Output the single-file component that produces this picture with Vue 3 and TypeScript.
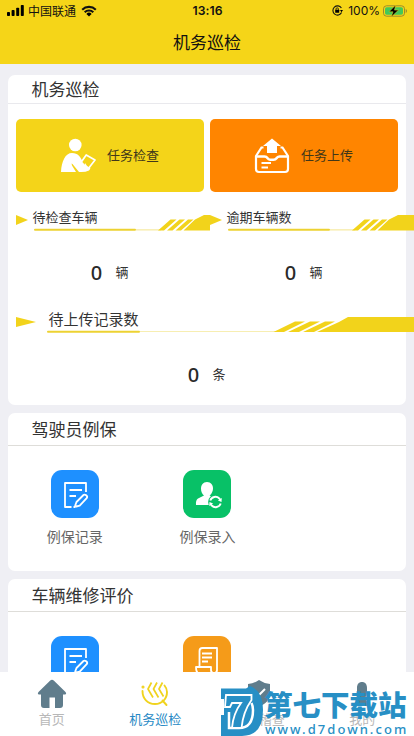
<script setup lang="ts">
import { ref } from 'vue'

interface Entry {
  label: string
  tone: 'blue' | 'green' | 'orange'
  icon: 'note' | 'user' | 'bill'
}
interface Section {
  title: string
  entries: Entry[]
}

const counts = ref([
  { label: '待检查车辆', value: 0, unit: '辆', end: 194 },
  { label: '逾期车辆数', value: 0, unit: '辆', end: 204 },
])
const pending = ref(0)

const sections: Section[] = [
  {
    title: '驾驶员例保',
    entries: [
      { label: '例保记录', tone: 'blue', icon: 'note' },
      { label: '例保录入', tone: 'green', icon: 'user' },
    ],
  },
  {
    title: '车辆维修评价',
    entries: [
      { label: '', tone: 'blue', icon: 'note' },
      { label: '', tone: 'orange', icon: 'bill' },
    ],
  },
]
</script>

<template>
  <div class="phone">
    <header class="top">
      <div class="status">
        <div class="status-left">
          <svg width="18" height="11" viewBox="0 0 18 11">
            <rect x="0" y="7" width="3" height="4" rx=".8" />
            <rect x="4.6" y="5" width="3" height="6" rx=".8" />
            <rect x="9.2" y="2.7" width="3" height="8.3" rx=".8" />
            <rect x="13.8" y="0" width="3" height="11" rx=".8" />
          </svg>
          <span class="carrier">中国联通</span>
          <svg width="16" height="12" viewBox="0 0 16 12">
            <path d="M1.2 4.7a9.7 9.7 0 0 1 13.6 0M3.7 7.3a6.1 6.1 0 0 1 8.6 0" fill="none" stroke="#111" stroke-width="2.1" />
            <path d="M8 11.6 5.4 8.9a3.7 3.7 0 0 1 5.2 0z" />
          </svg>
        </div>
        <b class="clock">13:16</b>
        <div class="status-right">
          <svg width="11" height="11" viewBox="0 0 11 11">
            <path d="M9.4 3A4.6 4.6 0 1 0 9.6 7.6" fill="none" stroke="#111" stroke-width="1.1" />
            <path d="M8 5h3L9.5 7.3z" />
            <rect x="3.2" y="4.8" width="4" height="3" rx=".4" />
            <path d="M4 5V4a1.2 1.2 0 0 1 2.4 0v1" fill="none" stroke="#111" stroke-width=".8" />
          </svg>
          <span class="percent">100%</span>
          <svg width="25" height="12" viewBox="0 0 25 12">
            <rect x=".5" y=".8" width="21" height="10.4" rx="3" fill="none" stroke="#9b8c2c" />
            <rect x="2" y="2.3" width="18" height="7.4" rx="1.6" fill="#43c859" />
            <path d="M22.7 4v4q1.3-.5 1.3-2t-1.3-2z" fill="#9b8c2c" />
            <path d="M12.7 0 6 6.8h4L8.2 12 15.5 5.1h-4z" stroke="#f5d518" stroke-width=".5" />
          </svg>
        </div>
      </div>
      <h1 class="title">机务巡检</h1>
    </header>

    <main class="content">
      <section class="card main-card">
        <h2 class="card-title">机务巡检</h2>
        <div class="actions">
          <button class="action yellow">
            <svg width="36" height="36" viewBox="0 0 36 36">
              <circle cx="15.3" cy="7" r="6.3" fill="#fff" />
              <path d="M1 34C1.500 23 5.500 15 12 15c6 0 9 4 11 10l3 3.500 4 .5q1 1.500-1 3.500-4 2-10 1.500l-6.500-8-1-.5.5 2 4 6.500z" fill="#fff" />
              <path d="M26.200 17 35 22l-6.200 8-4-2-3.500-4z" fill="#f4d419" stroke="#fff" stroke-width="1.700" stroke-linejoin="round" />
              <path d="m25 25 3.500 5-4.500-1z" fill="#fff" />
            </svg>
            <span>任务检查</span>
          </button>
          <button class="action orange">
            <svg width="36" height="36" viewBox="0 0 36 36" fill="none" stroke="#fff">
              <path d="M9.500 9.500H7.500L2 18v13q0 3 3 3h26q3 0 3-3V18L28.500 9.500h-2" stroke-width="2.200" />
              <path d="M2 18.500h8.500q2 0 3 1.700t3 1.500h3q2 0 3-1.500t3-1.700H34" stroke-width="2.600" />
              <path d="M7.500 25h9.500M7.500 29.500H14" stroke-width="2" />
              <path d="M18 .5 27 8h-4v7H13V8H9z" fill="#fff" stroke="none" />
            </svg>
            <span>任务上传</span>
          </button>
        </div>

        <div class="counts">
          <div v-for="c in counts" :key="c.label" class="count">
            <div class="banner">
              <svg class="mark" width="12" height="10" viewBox="0 0 12 10"><path d="M0 0 12 5 0 10z" /></svg>
              <span class="banner-label">{{ c.label }}</span>
            </div>
            <svg class="ribbon" width="186" height="17" viewBox="0 0 186 17">
              <path d="M120 14.900h25" stroke="#f4e58d" />
              <path d="M19 14.800h100" stroke="#edd232" stroke-width="2" stroke-linecap="round" />
              <path :d="`M142 15.500 154.500 4.500h6l-12.500 11zM151 15.500l12.500-11h5.500l-12.500 11zM159.500 15.500 172 4.500h5.500L165 15.500zM167.500 15.500 179 4.500 188 0H${c.end}v15.500z`" />
            </svg>
            <div class="figure"><b>{{ c.value }}</b><span>{{ c.unit }}</span></div>
          </div>
        </div>

        <div class="pending">
          <div class="banner wide">
            <svg class="mark" width="20" height="10" viewBox="0 0 20 10"><path d="M0 0 20 5 0 10z" /></svg>
            <span class="banner-label">待上传记录数</span>
          </div>
          <svg class="ribbon" width="398" height="17" viewBox="0 0 398 17">
            <path d="M124 14.500h136" stroke="#f7eeb2" />
            <path d="M32 14.800h91" stroke="#edd232" stroke-width="2" stroke-linecap="round" />
            <path d="M257.500 15 279 4.500h10L268 15zM272 15l22-10.500h10L283 15zM287 15l22-10.500h10L298 15zM301 15l22-10 9-5h66v15z" />
          </svg>
          <div class="figure"><b>{{ pending }}</b><span>条</span></div>
        </div>
      </section>

      <section v-for="s in sections" :key="s.title" class="card">
        <h2 class="card-title tall">{{ s.title }}</h2>
        <div class="entries">
          <div v-for="e in s.entries" :key="e.icon" class="entry">
            <div class="tile" :class="e.tone">
              <svg v-if="e.icon === 'note'" width="48" height="48" viewBox="0 0 48 48" fill="none" stroke="#fff" stroke-width="1.800" stroke-linejoin="round">
                <path d="M35 22v-9H14v24h6.500M22.500 37h2" />
                <path d="M18.500 20H31M18.500 26H25" />
                <path d="m25.500 32 7-7q1-1 2.700.3t.5 2.900l-7 7.500-3.500.8-1-1z" />
              </svg>
              <svg v-else-if="e.icon === 'user'" width="48" height="48" viewBox="0 0 48 48">
                <path d="M24 12c4 0 6 3 6 6.500S27.500 25 26.500 25.500L32 28l-5 7H13q-.5-5 2-6.500l6-3C19 24 18 21.500 18 18.500 18 15 20 12 24 12z" fill="#fff" />
                <circle cx="32.500" cy="32" r="7.400" fill="#08c167" />
                <path d="M27.300 30.500a5.400 5.400 0 0 1 9-2l1.200 1.500M37.700 33.500a5.400 5.400 0 0 1-9 2L27.500 34" fill="none" stroke="#fff" stroke-width="1.900" />
                <path d="m38.800 28-.3 4-3.600-1.500zM26.200 36l.3-4 3.600 1.500z" fill="#fff" />
              </svg>
              <svg v-else width="48" height="48" viewBox="0 0 48 48" fill="none" stroke="#fff" stroke-width="1.800" stroke-linejoin="round">
                <path d="M16.500 31V15q0-3 3-3H34v22q0 3-3 3H15q-2-1-2-6h15v3q0 3 3 3" />
                <path d="M19 17.500h10M19 21.500h10M19 25.500h6" />
              </svg>
            </div>
            <span>{{ e.label }}</span>
          </div>
        </div>
      </section>
    </main>

    <nav class="tabs">
      <div class="tab">
        <svg width="30" height="30" viewBox="0 0 30 30">
          <path d="M15 .8q1 0 2 1l11.500 11.200q1.500 2-.5 2.500H26V26q0 3-3 3h-5v-10.500h-5.500V29H7q-3 0-3-3V15.500H2q-2-.5-.5-2.500L13 1.800q1-1 2-1z" fill="#607d8c" />
        </svg>
        <span>首页</span>
      </div>
      <div class="tab active">
        <svg width="30" height="30" viewBox="0 0 30 30" fill="none" stroke="#f0d31e" stroke-width="1.900">
          <path d="M2.500 12c0 7.500 5 13 12.500 13 7 0 12-5 12-12 0-2.500-.8-4.500-2.500-6.500M22.500 21.500l4 4.500" stroke-linecap="round" />
          <circle cx="3" cy="8" r=".6" />
          <path d="M11.500 3.500 8 10l5 8.500M17 3.500 13.500 10l5 8.500M22.500 3.500 19 10l4.500 7.500" stroke-linejoin="round" stroke-width="1.700" />
        </svg>
        <span>机务巡检</span>
      </div>
      <div class="tab">
        <svg width="30" height="30" viewBox="0 0 30 30">
          <path d="M15 1q5 3.500 11 4v10c0 6-5 10-11 13C9 25 4 21 4 15V5q6-.5 11-4z" fill="#607d8c" />
          <path d="m10 13 4 4 7-7" fill="none" stroke="#fff" stroke-width="2" />
        </svg>
        <span>机务稽查</span>
      </div>
      <div class="tab">
        <svg width="30" height="30" viewBox="0 0 30 30">
          <path d="M15 3c3 0 5 2 5 6v4q0 5-3 6l3 3q3 2 3 5H7q0-3 3-5l3-3q-3-1-3-6V9c0-4 2-6 5-6z" fill="#607d8c" />
        </svg>
        <span>我的</span>
      </div>
    </nav>

    <div class="stamp">
      <svg width="44" height="50" viewBox="0 0 44 50">
        <path d="M1 2.500h25L30 0q13 5 13 24 0 26-21 26H1V29h3V13H1z" fill="#278fc5" />
        <path d="M9 26v16h10q14 0 14-18 0-4-1.500-7" fill="none" stroke="#fff" stroke-width="2.500" />
        <path d="M6 9h25.500v5Q23 26 21.500 42H12q1-14 9-25h-9l-2 4H5z" fill="#278fc5" stroke="#fff" stroke-width="1.800" />
      </svg>
      <div class="stamp-text">
        <strong>第七下载站</strong>
        <span>www.d7down.com</span>
      </div>
    </div>
  </div>
</template>

<style>
body {
  margin: 0;
  overflow: hidden;
}
</style>

<style scoped>
.phone {
  position: relative;
  display: flex;
  flex-direction: column;
  width: 414px;
  height: 736px;
  overflow: hidden;
  background: #efeff4;
  color: #333;
  font-family: "Noto Sans CJK SC", sans-serif;
}
.top {
  flex: none;
  height: 64px;
  background: #f5d518;
  color: #111;
}
.status {
  display: grid;
  grid-template-columns: 1fr auto 1fr;
  align-items: center;
  height: 21px;
  padding: 0 6px 0 7px;
}
.status-left,
.status-right {
  display: flex;
  align-items: center;
}
.status-right {
  justify-content: flex-end;
}
.carrier {
  margin: 0 5px 0 3px;
  font-size: 12px;
  line-height: 20px;
}
.clock {
  font: 600 12.2px/21px Inter, sans-serif;
  letter-spacing: 0.1px;
}
.percent {
  margin: 0 3px 0 5px;
  font: 12px/21px Inter, sans-serif;
}
.title {
  margin: 0;
  font-size: 17px;
  font-weight: 400;
  line-height: 41px;
  text-align: center;
}
.content {
  flex: 1;
  display: flex;
  flex-direction: column;
  gap: 8px;
  min-height: 0;
  padding: 11px 0 0 8px;
  overflow: hidden;
}
.card {
  flex: none;
  box-sizing: border-box;
  width: 398px;
  height: 158px;
  border-radius: 7px;
  background: #fff;
}
.main-card {
  height: 330px;
}
.card-title {
  box-sizing: border-box;
  height: 29px;
  margin: 0;
  padding-left: 23.5px;
  border-bottom: 1px solid #e9e9ed;
  font-size: 17px;
  font-weight: 400;
  line-height: 28px;
}
.card-title.tall {
  height: 33px;
  border-color: #deddd9;
  line-height: 31px;
}
.actions {
  display: grid;
  grid-template-columns: 1fr 1fr;
  gap: 6px;
  padding: 15px 8px 0;
}
.action {
  display: flex;
  align-items: center;
  gap: 11px;
  height: 73px;
  padding: 0 0 0 44px;
  border: 0;
  border-radius: 5px;
  color: #413719;
  font: 13px/20px "Noto Sans CJK SC", sans-serif;
}
.action span {
  padding-bottom: 1px;
}
.yellow {
  background: #f4d419;
}
.orange {
  background: #ff8500;
}
.counts {
  display: grid;
  grid-template-columns: 194px 194px;
  padding-left: 8px;
}
.count {
  height: 102px;
}
.banner {
  display: flex;
  align-items: center;
  height: 23px;
  padding-top: 14px;
}
.banner-label {
  margin-left: 4.5px;
  font-size: 13px;
  line-height: 20px;
  transform: translateY(-1px);
}
.mark,
.ribbon {
  flex: none;
  fill: #f2d31b;
}
.mark {
  transform: translateY(2px);
}
.ribbon {
  display: block;
  margin-top: -14px;
  overflow: visible;
}
.figure {
  display: flex;
  align-items: center;
  gap: 13px;
  height: 28px;
  margin-top: 27px;
  padding-left: 74.5px;
  font-size: 13px;
}
.figure span {
  padding-bottom: 3px;
}
.figure b {
  width: 12px;
  color: #292929;
  font: 500 20px/28px "Noto Sans", sans-serif;
  text-align: center;
}
.pending {
  padding-left: 8px;
}
.pending .figure {
  margin-top: 27px;
  padding-left: 171.5px;
}
.wide .banner-label {
  margin-left: 12.5px;
  font-size: 15px;
}
.entries {
  display: grid;
  grid-template-columns: repeat(3, 132.6px);
  padding: 24px 0 0 0.5px;
}
.entry {
  display: flex;
  flex-direction: column;
  align-items: center;
  gap: 7px;
  color: #666;
  font-size: 14px;
  line-height: 22px;
}
.tile {
  width: 48px;
  height: 48px;
  border-radius: 11px;
}
.tile svg {
  display: block;
}
.blue {
  background: #1e90ff;
}
.green {
  background: #08c167;
}
.tile.orange {
  background: #f59b19;
}
.tabs {
  flex: none;
  display: grid;
  grid-template-columns: repeat(4, 1fr);
  height: 64px;
  background: #fff;
}
.tab {
  display: flex;
  flex-direction: column;
  align-items: center;
  padding-top: 7px;
  color: #b8b8b8;
  font-size: 13px;
  line-height: 20px;
}
.tab.active {
  color: #288ac5;
}
.stamp {
  position: absolute;
  left: 220px;
  bottom: 0;
  display: flex;
  width: 194px;
  height: 50px;
  color: #278fc5;
}
.stamp-text {
  display: flex;
  flex-direction: column;
  white-space: nowrap;
}
.stamp-text strong {
  font-size: 28.5px;
  font-weight: 900;
  line-height: 36px;
}
.stamp-text span {
  margin-left: 1px;
  font: 500 13px/15px "Noto Sans", sans-serif;
  letter-spacing: 2.05px;
}
</style>
